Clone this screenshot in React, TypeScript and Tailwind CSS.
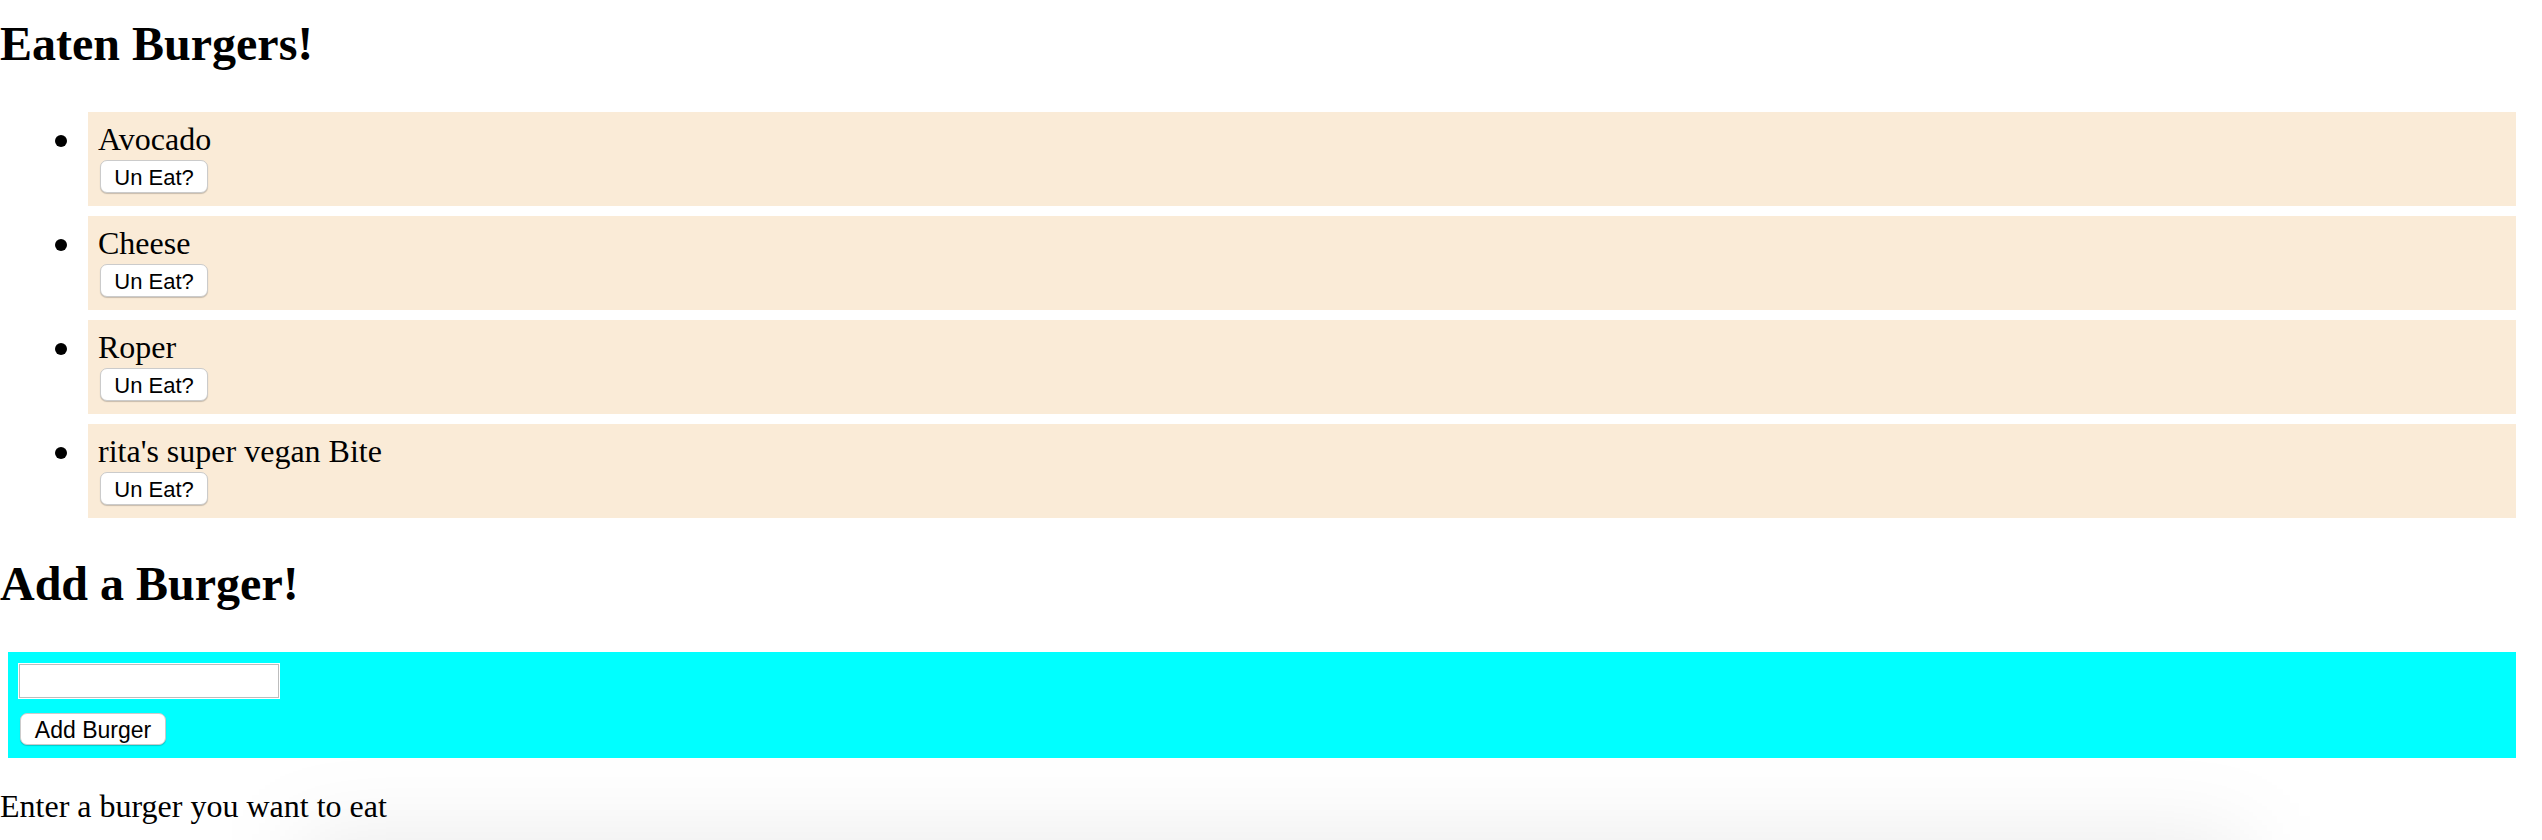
import React from "react";

const burgers = ["Avocado", "Cheese", "Roper", "rita's super vegan Bite"];

const btn =
  "bg-white rounded-[7px] border border-[#cbcbcb] shadow-[0_1px_1px_rgba(0,0,0,0.2)] text-[22px] leading-none text-black font-['Liberation_Sans',Arial,sans-serif] flex items-center justify-center pt-[2px]";

export default function App() {
  return (
    <div className="relative h-[840px] overflow-hidden bg-white text-black font-['Liberation_Serif','Times_New_Roman',serif]">
      <h2 className="mt-[16px] text-[48px] leading-[56px] font-bold">Eaten Burgers!</h2>

      <ul className="mt-[40px] ml-[8px] mr-[26px] flex flex-col gap-[10px]">
        {burgers.map((b) => (
          <li key={b} className="flex items-start">
            <div className="w-[80px] shrink-0 pt-[23px] pl-[47px]">
              <div className="w-[12px] h-[12px] rounded-full bg-black" />
            </div>
            <div className="flex-1 h-[94px] bg-[#faebd7] pt-[9px] pl-[10px]">
              <div className="text-[32px] leading-[37px]">{b}</div>
              <button className={`${btn} mt-[2px] ml-[2px] w-[108px] h-[33px]`}>Un Eat?</button>
            </div>
          </li>
        ))}
      </ul>

      <h2 className="mt-[38px] text-[48px] leading-[56px] font-bold">Add a Burger!</h2>

      <form
        className="mt-[40px] ml-[8px] mr-[26px] h-[106px] bg-[#00ffff] pt-[11px] pl-[10px] flex flex-col items-start"
        onSubmit={(e) => e.preventDefault()}
      >
        <input
          type="text"
          className="w-[262px] h-[36px] bg-white border border-white shadow-[inset_0_0_0_1px_#bdbdbd] outline-none"
        />
        <button type="submit" className={`${btn} mt-[14px] ml-[2px] w-[146px] h-[32px] text-[23px]`}>
          Add Burger
        </button>
      </form>

      <p className="mt-[30px] text-[32px] leading-[37px]">Enter a burger you want to eat</p>

      <div className="pointer-events-none absolute left-[300px] right-[300px] top-[845px] h-[70px] bg-black/10 blur-[45px]" />
    </div>
  );
}
